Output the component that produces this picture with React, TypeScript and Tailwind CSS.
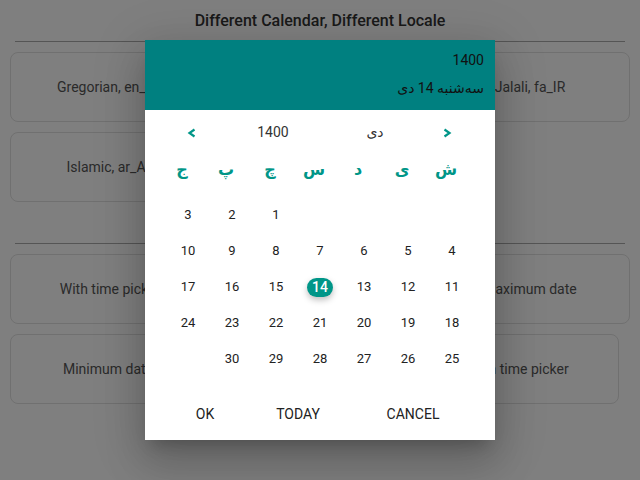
import React from "react";

const font = { fontFamily: 'Roboto, "DejaVu Sans", sans-serif' };

function Card({ label, className = "" }: { label: string; className?: string }) {
  return (
    <div
      className={
        "h-[70px] rounded-[8px] border border-[#e0e0e0] flex items-center justify-center text-[14px] text-[#555] " +
        className
      }
    >
      {label}
    </div>
  );
}

function SectionTitle({ text }: { text: string }) {
  return (
    <div className="mx-[15px] h-[42px] border-b border-[#aaa] flex items-center justify-center text-[16px] font-medium text-[#333]">
      {text}
    </div>
  );
}

const weekdays = ["ش", "ی", "د", "س", "چ", "پ", "ج"];
const rows: (number | "")[][] = [
  ["", "", "", "", 1, 2, 3],
  [4, 5, 6, 7, 8, 9, 10],
  [11, 12, 13, 14, 15, 16, 17],
  [18, 19, 20, 21, 22, 23, 24],
  [25, 26, 27, 28, 29, 30, ""],
];

function Chevron({ dir }: { dir: "left" | "right" }) {
  return (
    <svg width="10" height="10" viewBox="0 0 10 10">
      <path
        d={dir === "left" ? "M7.5 1.5 L2.5 5 L7.5 8.5" : "M2.5 1.5 L7.5 5 L2.5 8.5"}
        fill="none"
        stroke="#009688"
        strokeWidth="2.2"
        strokeLinejoin="miter"
      />
    </svg>
  );
}

export default function App() {
  return (
    <div className="relative w-[640px] h-[480px] overflow-hidden bg-white" style={font}>
      <SectionTitle text="Different Calendar, Different Locale" />
      <div className="mt-[10px] px-[10px] grid grid-cols-3 gap-[10px]">
        <Card label="Gregorian, en_US" />
        <Card label="Indian, hi_IN" />
        <Card label="Jalali, fa_IR" />
        <Card label="Islamic, ar_AE" />
        <Card label="Hebrew, he_IL" />
      </div>
      <SectionTitle text="Other Examples" />
      <div className="mt-[10px] px-[10px] grid grid-cols-3 gap-[10px]">
        <Card label="With time picker" />
        <Card label="Date range" />
        <Card label="Maximum date" />
      </div>
      <div className="mt-[10px] pl-[10px] pr-[21px] flex gap-[10px]">
        <Card label="Minimum date" className="w-[196px]" />
        <Card label="Disabled days" className="flex-1" />
        <Card label="Range with time picker" className="w-[242px]" />
      </div>

      {/* overlay */}
      <div className="absolute inset-0 bg-black/50 flex items-center justify-center">
        <div className="w-[350px] h-[400px] bg-white flex flex-col shadow-[0_11px_15px_-7px_rgba(0,0,0,0.2),0_24px_38px_3px_rgba(0,0,0,0.14),0_9px_46px_8px_rgba(0,0,0,0.12)]">
          <div className="h-[70px] bg-[#008080] flex flex-col items-end pr-[11px] pt-[10px] text-[14px] text-[#111]">
            <div className="leading-[20px]">1400</div>
            <div className="leading-[20px] mt-[8px]" dir="rtl">
              سه‌شنبه 14 دی
            </div>
          </div>
          <div className="h-[42px] pt-[3px] flex items-center text-[14px] text-[#333]">
            <div className="ml-[35px] w-[24px] flex justify-center">
              <Chevron dir="left" />
            </div>
            <div className="ml-[39px] w-[60px] text-center">1400</div>
            <div className="ml-[52px] w-[40px] text-center" dir="rtl">
              دی
            </div>
            <div className="ml-[40px] w-[24px] flex justify-center">
              <Chevron dir="right" />
            </div>
          </div>
          <div dir="rtl" className="h-[36px] px-[21px] grid grid-cols-7 items-center text-[16px] font-bold text-[#009688]">
            {weekdays.map((w) => (
              <div key={w} className="text-center pr-[12px]">
                {w}
              </div>
            ))}
          </div>
          <div dir="rtl" className="mt-[9px] px-[21px]">
            {rows.map((r, i) => (
              <div key={i} className="h-[36px] grid grid-cols-7 items-center text-[13px] text-[#222]">
                {r.map((d, j) => (
                  <div key={j} className="flex justify-center">
                    {d === 14 ? (
                      <div className="w-[26px] h-[19px] rounded-full bg-[#009688] text-white font-medium text-[14px] flex items-center justify-center shadow-[0_3px_6px_rgba(0,0,0,0.25)]">
                        14
                      </div>
                    ) : (
                      <span>{d}</span>
                    )}
                  </div>
                ))}
              </div>
            ))}
          </div>
          <div className="mt-auto mb-[8px] h-[36px] flex items-center text-[14px] text-[#222]">
            <div className="ml-[28px] w-[64px] text-center">OK</div>
            <div className="ml-[24px] w-[74px] text-center">TODAY</div>
            <div className="ml-[36px] w-[84px] text-center">CANCEL</div>
          </div>
        </div>
      </div>
    </div>
  );
}
